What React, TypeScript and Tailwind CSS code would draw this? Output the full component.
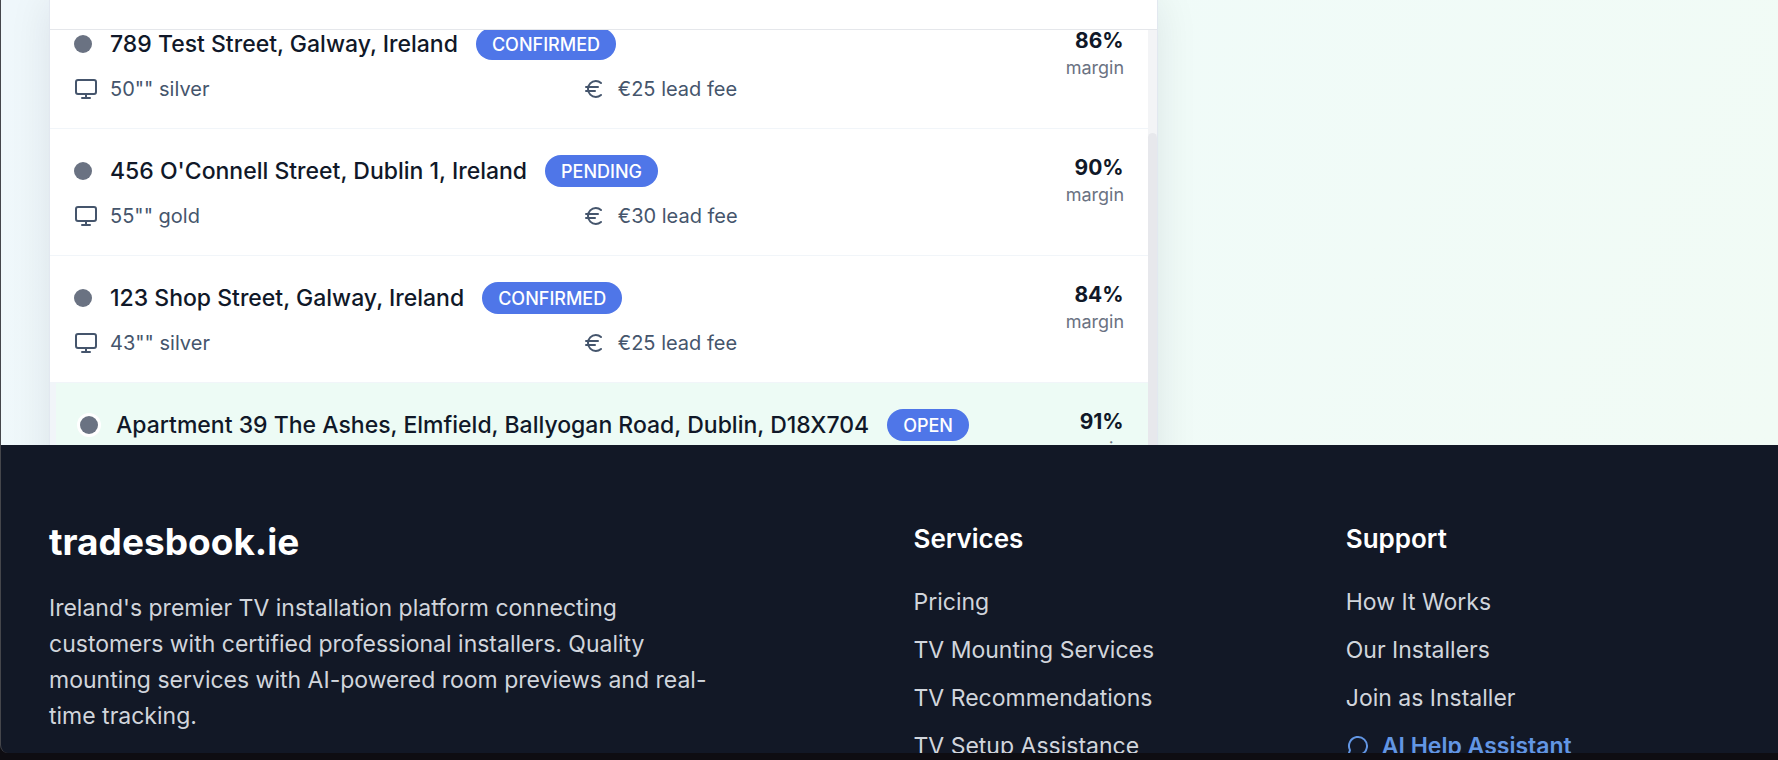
import React from "react";
import { Euro, Monitor } from "lucide-react";

type Lead = {
  address: string;
  status: string;
  tv: string;
  fee: string;
  margin: string;
  highlighted?: boolean;
};

const leads: Lead[] = [
  { address: "789 Test Street, Galway, Ireland", status: "CONFIRMED", tv: '50"" silver', fee: "€25 lead fee", margin: "86%" },
  { address: "456 O'Connell Street, Dublin 1, Ireland", status: "PENDING", tv: '55"" gold', fee: "€30 lead fee", margin: "90%" },
  { address: "123 Shop Street, Galway, Ireland", status: "CONFIRMED", tv: '43"" silver', fee: "€25 lead fee", margin: "84%" },
  {
    address: "Apartment 39 The Ashes, Elmfield, Ballyogan Road, Dublin, D18X704",
    status: "OPEN",
    tv: "",
    fee: "",
    margin: "91%",
    highlighted: true,
  },
];

const services = ["Pricing", "TV Mounting Services", "TV Recommendations", "TV Setup Assistance"];
const support = ["How It Works", "Our Installers", "Join as Installer"];

function LeadRow({ lead }: { lead: Lead }) {
  return (
    <li
      className={
        lead.highlighted
          ? "flex border-b border-l-[6px] border-slate-100 bg-[#edfbf5] p-6"
          : "flex border-b border-slate-100 bg-white p-6"
      }
    >
      <div className="min-w-0 flex-1">
        <div className="flex h-9 items-center gap-[18px]">
          <span
            className={
              lead.highlighted
                ? "size-[18px] shrink-0 rounded-full bg-gray-500 ring-3 ring-white"
                : "size-[18px] shrink-0 rounded-full bg-gray-500"
            }
          />
          <h3 className="text-[23px] leading-9 font-medium whitespace-nowrap text-gray-900">{lead.address}</h3>
          <span className="flex h-8 items-center rounded-full bg-[#4f76e8] px-4 text-[18px] font-medium whitespace-nowrap text-white">
            {lead.status}
          </span>
        </div>
        {lead.tv && (
          <div className="mt-3 grid grid-cols-2 gap-6 text-[20px] leading-[30px] text-slate-600">
            <div className="flex items-center gap-3">
              <Monitor size={24} />
              <span>{lead.tv}</span>
            </div>
            <div className="flex items-center gap-3">
              <Euro size={24} />
              <span>{lead.fee}</span>
            </div>
          </div>
        )}
      </div>
      <div className="w-[58px] shrink-0 text-right">
        <div className="text-[21px] leading-[30px] font-bold text-gray-900">{lead.margin}</div>
        <div className="text-[18px] leading-6 text-gray-500">margin</div>
      </div>
    </li>
  );
}

function FooterLink({ children }: { children: React.ReactNode }) {
  return (
    <li>
      <a href="#" className="text-gray-300">
        {children}
      </a>
    </li>
  );
}

export default function App() {
  return (
    <div className="h-screen overflow-hidden bg-[#0e0d12] pb-[7px] font-['Inter',sans-serif]">
      <div className="flex h-full flex-col overflow-hidden rounded-bl-lg border-l border-[#45464b] bg-[#121826]">
        <main className="h-[445px] shrink-0 overflow-hidden bg-linear-115 from-[#eff7fb] via-[#f0fbf9] to-[#f1fbf5] px-12">
          <div className="grid h-full grid-cols-3 gap-9">
            <section className="col-span-2 flex flex-col border-x border-slate-200 bg-white shadow-[0_0_40px_rgba(15,23,42,0.09)]">
              <div className="h-[30px] shrink-0 border-b border-gray-200" />
              <div className="flex min-h-0 flex-1 overflow-hidden">
                <ul className="-mt-7 min-w-0 flex-1">
                  {leads.map((lead) => (
                    <LeadRow key={lead.address} lead={lead} />
                  ))}
                </ul>
                <div className="w-[9px] shrink-0 bg-gray-100 pt-[103px]">
                  <div className="h-full rounded-t-full bg-[#e7e8ec]" />
                </div>
              </div>
            </section>
          </div>
        </main>

        <footer className="min-h-0 flex-1 overflow-hidden px-12 pt-[73px]">
          <div className="grid grid-cols-4 gap-12 text-[23px] leading-9">
            <div className="col-span-2">
              <h2 className="mb-6 text-[37px] leading-[48px] font-bold text-white">tradesbook.ie</h2>
              <p className="max-w-[672px] text-gray-300">
                Ireland's premier TV installation platform connecting customers with certified professional installers.
                Quality mounting services with AI-powered room previews and real-time tracking.
              </p>
            </div>
            <nav aria-label="Services">
              <h3 className="mb-6 text-[26px] leading-[42px] font-semibold text-white">Services</h3>
              <ul className="flex flex-col gap-3">
                {services.map((label) => (
                  <FooterLink key={label}>{label}</FooterLink>
                ))}
              </ul>
            </nav>
            <nav aria-label="Support">
              <h3 className="mb-6 text-[26px] leading-[42px] font-semibold text-white">Support</h3>
              <ul className="flex flex-col gap-3">
                {support.map((label) => (
                  <FooterLink key={label}>{label}</FooterLink>
                ))}
                <li>
                  <a href="#" className="flex items-center gap-3 font-semibold text-[#6296e4]">
                    <svg
                      viewBox="0 0 24 24"
                      className="size-6"
                      fill="none"
                      stroke="currentColor"
                      strokeWidth="2"
                      strokeLinecap="round"
                      strokeLinejoin="round"
                      aria-hidden="true"
                    >
                      <path d="M7.9 20A9 9 0 1 0 4 16.1L2 22Z" />
                    </svg>
                    AI Help Assistant
                  </a>
                </li>
              </ul>
            </nav>
          </div>
        </footer>
      </div>
    </div>
  );
}
